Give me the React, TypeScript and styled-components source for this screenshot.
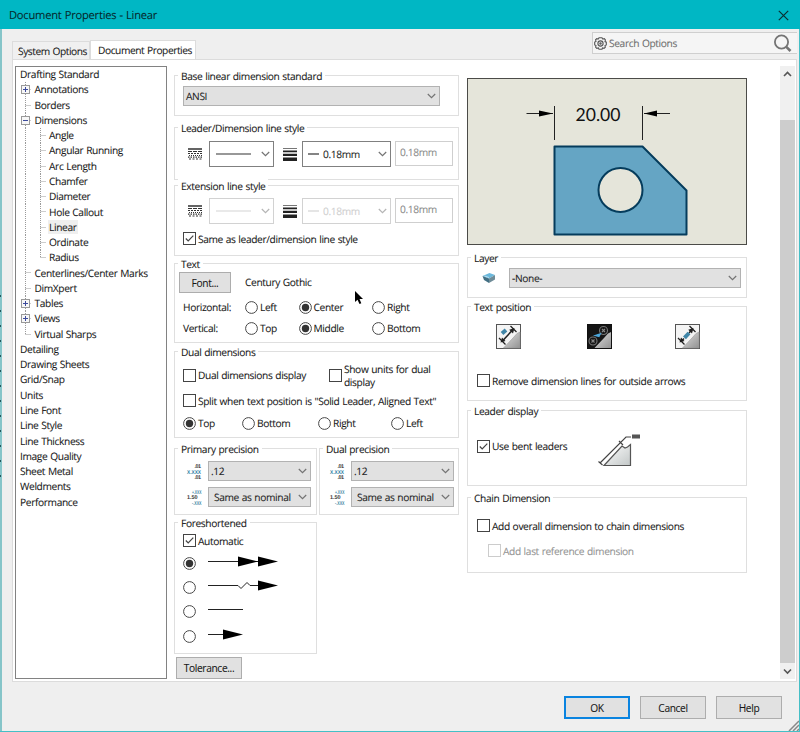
import React from "react";
import styled, { createGlobalStyle } from "styled-components";

const Global = createGlobalStyle`
  body { margin: 0; background: #efefef; }
  * { box-sizing: border-box; }
  button, input { font: inherit; color: inherit; letter-spacing: inherit; }
`;

const Window = styled.div`
  position: relative;
  width: 800px;
  height: 732px;
  overflow: hidden;
  display: flex;
  flex-direction: column;
  background: #efefef;
  color: #161616;
  font: 10.2px/13px "Open Sans", "Noto Sans", sans-serif;
  letter-spacing: -0.36px;
  word-spacing: 0.5px;
  -webkit-text-stroke: 0.08px currentColor;
  text-rendering: geometricPrecision;
  white-space: nowrap;
`;
const TitleBar = styled.header`
  height: 29px;
  flex: none;
  display: flex;
  align-items: center;
  justify-content: space-between;
  padding: 1px 11px 0 9px;
  background: #00b7c4;
  color: #06292c;
  font-size: 11.2px;
  letter-spacing: -0.25px;
`;
const Frame = styled.div`
  flex: 1;
  display: flex;
  border-right: 1px solid #45bfc6;
  border-bottom: 1px solid #45bfc6;
`;
const Edge = styled.div`
  width: 2px;
  background: #86c5c9;
  display: flex;
  padding-top: 266px;
`;
const EdgeMarks = styled.div`
  width: 1px;
  height: 190px;
  background: repeating-linear-gradient(#24575b 0 2px, #86c5c9 2px 15px);
`;
const Body = styled.div`
  flex: 1;
  display: flex;
  flex-direction: column;
  padding-left: 10px;
`;
const TopStrip = styled.div`
  height: 30px;
  display: flex;
  justify-content: space-between;
  align-items: flex-end;
`;
const Tabs = styled.div`
  display: flex;
  align-items: flex-end;
`;
const Tab = styled.div<{ $active?: boolean }>`
  width: ${(p) => (p.$active ? 106 : 78)}px;
  height: ${(p) => (p.$active ? 20 : 18)}px;
  margin-bottom: ${(p) => (p.$active ? -1 : 0)}px;
  border: 1px solid #dcdcdc;
  border-bottom: 0;
  background: ${(p) => (p.$active ? "#fff" : "#f0f0f0")};
  padding: ${(p) => (p.$active ? "3px 0 0 7px" : "3px 0 0 5px")};
  letter-spacing: -0.43px;
`;
const Search = styled.div`
  width: 205px;
  height: 22px;
  margin: 0 2px 5px 0;
  display: flex;
  align-items: center;
  gap: 2px;
  padding: 0 4px 0 1px;
  border: 1px solid #cfcfcf;
  border-right: 0;
  background: #f5f5f5;
  color: #6c6c6c;
  & > span { flex: 1; padding-top: 1px; }
`;
const Panel = styled.main`
  height: 623px;
  margin-right: 2px;
  display: flex;
  padding: 6px 0 0 2px;
  border: 1px solid #dcdcdc;
  background: #fff;
`;
const Tree = styled.div`
  width: 152px;
  height: 613px;
  border: 1px solid #828282;
`;
const TreeRow = styled.div`
  height: 15.27px;
  display: flex;
  align-items: center;
`;
const Guide = styled.svg`
  flex: none;
  height: 15.27px;
  overflow: visible;
`;
const TreeText = styled.span<{ $selected?: boolean; $root?: boolean }>`
  margin: -1px 0 0 ${(p) => (p.$root ? 3 : 0)}px;
  padding: 0 1px;
  line-height: 14px;
  background: ${(p) => (p.$selected ? "#efefef" : "transparent")};
`;
const Column = styled.section<{ $left: number; $width: number; $top: number }>`
  width: ${(p) => p.$width}px;
  margin-left: ${(p) => p.$left}px;
  padding-top: ${(p) => p.$top}px;
  display: flex;
  flex-direction: column;
`;
const GroupBox = styled.div<{ $height: number; $gap: number; $width?: number }>`
  height: ${(p) => p.$height}px;
  width: ${(p) => (p.$width ? `${p.$width}px` : "100%")};
  margin-bottom: ${(p) => p.$gap}px;
  flex: none;
  border: 1px solid #dfdfdf;
`;
const Legend = styled.div`
  width: fit-content;
  height: 14px;
  margin: -7px 0 -8px 3px;
  padding: 1px 3px 0;
  background: #fff;
`;
const Row = styled.div<{ $top: number; $h: number; $cols: string; $left?: number }>`
  margin-top: ${(p) => p.$top}px;
  height: ${(p) => p.$h}px;
  padding-left: ${(p) => p.$left ?? 8}px;
  display: grid;
  grid-template-columns: ${(p) => p.$cols};
  align-items: center;
`;
const Pair = styled.div`
  display: flex;
  gap: 2px;
`;
const SelectBox = styled.div<{ $w: number; $h: number; $kind?: "white" | "off"; $pad?: number }>`
  width: ${(p) => p.$w}px;
  height: ${(p) => p.$h}px;
  display: flex;
  align-items: center;
  gap: 4px;
  padding: 0 3px 0 ${(p) => p.$pad ?? 2}px;
  border: 1px solid ${(p) => (p.$kind === "white" ? "#808080" : p.$kind === "off" ? "#d2d2d2" : "#b2b2b2")};
  background: ${(p) => (p.$kind ? "#fff" : "#e1e1e1")};
  color: ${(p) => (p.$kind === "off" ? "#cfcfcf" : "#1d1d1d")};
  & > span { padding-top: 1px; }
  & > svg:last-child { margin-left: auto; flex: none; }
`;
const Field = styled.div`
  width: 58px;
  height: 25px;
  align-self: start;
  padding: 4px 4px;
  border: 1px solid #cfcfcf;
  color: #8a8a8a;
`;
const Choice = styled.label<{ $off?: boolean }>`
  display: flex;
  align-items: center;
  gap: 2px;
  line-height: 12.5px;
  color: ${(p) => (p.$off ? "#929292" : "inherit")};
  & > svg { flex: none; }
  & > span { padding-top: 1px; }
`;
const Button = styled.button<{ $w: number; $h: number; $primary?: boolean }>`
  width: ${(p) => p.$w}px;
  height: ${(p) => p.$h}px;
  padding: 1px 0 0;
  border: ${(p) => (p.$primary ? "2px solid #0a84e0" : "1px solid #adadad")};
  background: #e1e1e1;
`;
const Preview = styled.svg`
  display: block;
  flex: none;
  margin-bottom: 12px;
`;
const ScrollBar = styled.div`
  width: 15px;
  height: 613px;
  margin-left: 33px;
  display: flex;
  flex-direction: column;
  justify-content: space-between;
  background: #f0f0f0;
`;
const Arrow = styled.svg`
  display: block;
  margin: 1px 0;
`;
const Thumb = styled.div`
  height: 543px;
  margin-top: 38px;
  background: #cdcdcd;
`;
const Footer = styled.footer`
  display: flex;
  justify-content: flex-end;
  gap: 10px;
  padding: 14px 17px 0 0;
`;
const Overlay = styled.svg<{ $x: number; $y: number }>`
  position: absolute;
  left: ${(p) => p.$x}px;
  top: ${(p) => p.$y}px;
`;
const NumberIcon = styled.svg`
  display: block;
  overflow: visible;
  font-family: "Liberation Sans", sans-serif;
  font-size: 5.5px;
  font-weight: bold;
  letter-spacing: 0;
  -webkit-text-stroke: 0;
`;

const Chevron = ({ off }: { off?: boolean }) => (
  <svg width="9" height="7" viewBox="0 0 9 7">
    <path d="M.8 1 4.5 4.7 8.2 1" fill="none" stroke={off ? "#b5b5b5" : "#747474"} strokeWidth="1.2" />
  </svg>
);

function Check({ on, off, children }: { on?: boolean; off?: boolean; children: React.ReactNode }) {
  return (
    <Choice $off={off}>
      <svg width="13" height="13">
        <rect x=".5" y=".5" width="12" height="12" fill="#fff" stroke={off ? "#cccccc" : "#444"} />
        {on && <path d="M2.8 6.5 5.2 9 10.3 3.6" fill="none" stroke="#444" strokeWidth="1.2" />}
      </svg>
      <span>{children}</span>
    </Choice>
  );
}

function Radio({ on, children }: { on?: boolean; children?: React.ReactNode }) {
  return (
    <Choice>
      <svg width="13" height="13">
        <circle cx="6.5" cy="6.5" r="5.9" fill="#fff" stroke="#484848" />
        {on && <circle cx="6.5" cy="6.5" r="3.7" fill="#333" />}
      </svg>
      <span>{children}</span>
    </Choice>
  );
}

type GroupProps = { title: string; h: number; gap?: number; w?: number; children: React.ReactNode };
const Group = ({ title, h, gap = 0, w, children }: GroupProps) => (
  <GroupBox $height={h} $gap={gap} $width={w}>
    <Legend>{title}</Legend>
    {children}
  </GroupBox>
);

type Node = { t: string; d: number; box?: "+" | "-"; last?: boolean };
const tree: Node[] = [
  { t: "Drafting Standard", d: 0 },
  { t: "Annotations", d: 1, box: "+" },
  { t: "Borders", d: 1 },
  { t: "Dimensions", d: 1, box: "-" },
  ...["Angle", "Angular Running", "Arc Length", "Chamfer", "Diameter", "Hole Callout", "Linear", "Ordinate"].map((t) => ({ t, d: 2 })),
  { t: "Radius", d: 2, last: true },
  { t: "Centerlines/Center Marks", d: 1 },
  { t: "DimXpert", d: 1 },
  { t: "Tables", d: 1, box: "+" },
  { t: "Views", d: 1, box: "+" },
  { t: "Virtual Sharps", d: 1, last: true },
  ...["Detailing", "Drawing Sheets", "Grid/Snap", "Units", "Line Font", "Line Style", "Line Thickness", "Image Quality", "Sheet Metal", "Weldments", "Performance"].map((t) => ({ t, d: 0 })),
];

function TreeItem({ n }: { n: Node }) {
  const x = n.d === 1 ? 9.5 : 24.5;
  return (
    <TreeRow>
      {n.d > 0 && (
        <Guide width={n.d === 1 ? 17.5 : 32}>
          <g stroke="#9a9a9a" strokeDasharray="1 1" fill="none">
            {n.d === 2 && <path d="M9.5 0V15.3" />}
            <path d={`M${x} 0V${n.last ? 8 : 15.3}M${x} 7.5H${x + 6}`} />
          </g>
          {n.box && (
            <g>
              <rect x="5.5" y="3.5" width="8" height="8" fill="#f7f7f7" stroke="#999" />
              <path d={n.box === "+" ? "M7 7.5H12M9.5 5V10" : "M7 7.5H12"} stroke="#3d4b9c" />
            </g>
          )}
        </Guide>
      )}
      <TreeText $root={n.d === 0} $selected={n.t === "Linear"}>{n.t}</TreeText>
    </TreeRow>
  );
}

const StyleIcon = () => (
  <svg width="14" height="12">
    <path d="M0 1H14" stroke="#222" strokeWidth="1.4" />
    <g stroke="#333" strokeWidth="1.2" fill="none">
      <path d="M0 3.5H14" strokeDasharray="4 1" />
      <path d="M0 5.5H14" strokeDasharray="2 1" />
      <path d="M1 7.5H14" strokeDasharray="1 1" />
      <path d="M0 9.2H14" strokeDasharray="1.5 1" />
      <path d="M1 11H14" strokeDasharray="2 1.5" />
    </g>
  </svg>
);
const WeightIcon = () => (
  <svg width="14" height="13" fill="#222">
    <path d="M0 0H14V1H0Z" fill="#777" />
    <path d="M0 2.6H14V4.2H0ZM0 5.7H14V8H0ZM0 9.6H14V13H0Z" />
  </svg>
);

function LineStyleRow({ off, top }: { off?: boolean; top: number }) {
  const c = off ? "#d4d4d4" : "#333";
  const kind = off ? "off" : "white";
  return (
    <Row $top={top} $h={26} $left={13} $cols="21px 74px 19px 93px 58px">
      <StyleIcon />
      <SelectBox $w={65} $h={26} $kind={kind} $pad={6}>
        <svg width="35" height="2"><path d="M0 1H35" stroke={c} strokeWidth="1.2" /></svg>
        <Chevron off={off} />
      </SelectBox>
      <WeightIcon />
      <SelectBox $w={89} $h={26} $kind={kind} $pad={5}>
        <svg width="11" height="2"><path d="M0 1H11" stroke={c} strokeWidth="1.2" /></svg>
        <span>0.18mm</span>
        <Chevron off={off} />
      </SelectBox>
      <Field>0.18mm</Field>
    </Row>
  );
}

const DecimalIcon = () => (
  <NumberIcon width="16" height="15">
    <text x="7.5" y="4" fill="#333" textLength="6.5">.01</text>
    <text x="0" y="9.5" fill="#2f7fa5" textLength="14" lengthAdjust="spacingAndGlyphs">X.XXX</text>
    <text x="7.5" y="15" fill="#333" textLength="6.5">.01</text>
  </NumberIcon>
);
const ToleranceIcon = () => (
  <NumberIcon width="16" height="16">
    <text x="5" y="5" fill="#4688a5" textLength="9.5" lengthAdjust="spacingAndGlyphs">+.XXX</text>
    <text x="0" y="10" fill="#333" textLength="10.5">1.50</text>
    <text x="5" y="15.5" fill="#4688a5" textLength="9.5" lengthAdjust="spacingAndGlyphs">-.XXX</text>
  </NumberIcon>
);

const Precision = ({ title, w, left }: { title: string; w: number; left: number }) => (
  <Group title={title} h={67} w={w}>
    <Row $top={13} $h={20} $left={left} $cols="21px 103px">
      <DecimalIcon />
      <SelectBox $w={103} $h={20}><span>.12</span><Chevron /></SelectBox>
    </Row>
    <Row $top={6} $h={20} $left={left} $cols="21px 103px">
      <ToleranceIcon />
      <SelectBox $w={103} $h={20} $pad={5}><span>Same as nominal</span><Chevron /></SelectBox>
    </Row>
  </Group>
);

const leaders = [
  { line: "M0 6.5H50", heads: [30, 50] },
  { line: "M0 6.5H30L33 9.5 39 3.5 42 6.5H52", heads: [50] },
  { line: "M0 6.5H35", heads: [] },
  { line: "M0 6.5H16", heads: [15] },
];

function PositionIcon({ mode }: { mode: "above" | "dark" | "inline" }) {
  const dark = mode === "dark";
  return (
    <svg width="25" height="25" viewBox="0 0 25 25">
      <defs>
        <linearGradient id={`face-${mode}`} x1="0" y1="0" x2="1" y2="1">
          <stop stopColor="#e2e2e2" /><stop offset="1" stopColor="#929292" />
        </linearGradient>
      </defs>
      <rect x=".5" y=".5" width="24" height="24" fill={dark ? "#151515" : "#f4f4f4"} stroke={dark ? "#111" : "#555"} />
      <path d="M7.5 24 17 14 21 9.5 24 8V24Z" fill={`url(#face-${mode})`} stroke={dark ? "none" : "#999"} strokeWidth=".6" />
      {dark ? (
        <g fill="none" stroke="#777" strokeWidth="1.1">
          <circle cx="16.5" cy="6.5" r="4" /><circle cx="6" cy="17" r="4" />
          <path d="M15 5 18 8M18 5 15 8M4.500 15.500 7.500 18.500M7.500 15.500 4.500 18.500" stroke="#888" />
          <path d="M8 11.5 13.5 9.8 12 12.5Z" fill="#4ca7dc" stroke="#4ca7dc" />
        </g>
      ) : (
        <g stroke="#222" fill="none">
          <path d="M14.5 2 20.5 8M3 14 9.5 20.5" strokeWidth="1.3" />
          <path d={mode === "above" ? "M6 17.5 17.5 5" : "M6 17.5 9 14.5M14 9 17.5 5"} strokeWidth="1.5" />
          <path d="M18.5 4 17 9.500 13.2 5.7ZM4.5 18.5 6 13.5 9.5 17Z" fill="#222" stroke="none" />
          <path d={mode === "above" ? "M6 9.5 10 6" : "M9.5 13.8 14 9"} stroke="#3f85a7" strokeWidth="4" />
        </g>
      )}
    </svg>
  );
}

const BentLeader = () => (
  <svg width="43" height="34" viewBox="0 0 43 34">
    <defs>
      <linearGradient id="bent" x1="0" y1="0" x2="1" y2="1">
        <stop stopColor="#fff" /><stop offset="1" stopColor="#c2c7c7" />
      </linearGradient>
    </defs>
    <path d="M6 32.5 24 13 27 15 29.5 14 32.5 11.5V32.5Z" fill="url(#bent)" stroke="#555" strokeWidth="1.2" />
    <path d="M2 30 28 4H33M.5 28.5 4.500 32M21 8 25 12" fill="none" stroke="#444" strokeWidth="1.2" />
    <rect x="34" y="1.5" width="8" height="4" fill="#555" />
  </svg>
);

export default function App() {
  return (
    <Window>
      <Global />
      <TitleBar>
        <span>Document Properties - Linear</span>
        <svg width="11" height="11"><path d="M.8.8 10.2 10.2M10.2.8.8 10.2" stroke="#0b3033" strokeWidth="1.2" /></svg>
      </TitleBar>
      <Frame>
        <Edge><EdgeMarks /></Edge>
        <Body>
          <TopStrip>
            <Tabs>
              <Tab>System Options</Tab>
              <Tab $active>Document Properties</Tab>
            </Tabs>
            <Search>
              <svg width="13" height="13" viewBox="0 0 13 13" fill="none" stroke="#555" strokeWidth="1.1">
                <path d="M5 .8H8L8.6 2 10.3 1.7 11.4 3 11 4.6 12.3 5.2V8L11 8.6 11.3 10.2 10 11.4 8.5 11 8 12.3H5L4.4 11 2.8 11.4 1.6 10.2 2 8.6.7 8V5L2 4.4 1.6 2.8 2.8 1.7 4.4 2Z" />
                <circle cx="6.5" cy="6.5" r="2.6" /><circle cx="6.5" cy="6.5" r=".7" />
              </svg>
              <span>Search Options</span>
              <svg width="20" height="20" viewBox="0 0 20 20" fill="none" stroke="#747474">
                <circle cx="8.5" cy="9" r="6.6" strokeWidth="1.8" />
                <path d="M13.3 13.8 17.5 18" strokeWidth="2.6" />
              </svg>
            </Search>
          </TopStrip>
          <Panel>
            <Tree>{tree.map((n) => <TreeItem key={n.t} n={n} />)}</Tree>
            <Column $left={7} $width={285} $top={9}>
              <Group title="Base linear dimension standard" h={41} gap={11}>
                <Row $top={11} $h={20} $cols="257px">
                  <SelectBox $w={257} $h={20}><span>ANSI</span><Chevron /></SelectBox>
                </Row>
              </Group>
              <Group title="Leader/Dimension line style" h={53} gap={5}>
                <LineStyleRow top={14} />
              </Group>
              <Group title="Extension line style" h={71} gap={7}>
                <LineStyleRow off top={13} />
                <Row $top={8} $h={13} $cols="1fr"><Check on>Same as leader/dimension line style</Check></Row>
              </Group>
              <Group title="Text" h={80} gap={8}>
                <Row $top={9} $h={21} $left={4} $cols="66px 1fr">
                  <Button $w={52} $h={21}>Font...</Button><span>Century Gothic</span>
                </Row>
                <Row $top={7} $h={14} $cols="62px 53.5px 73.5px 1fr">
                  <span>Horizontal:</span><Radio>Left</Radio><Radio on>Center</Radio><Radio>Right</Radio>
                </Row>
                <Row $top={7} $h={14} $cols="62px 53.5px 73.5px 1fr">
                  <span>Vertical:</span><Radio>Top</Radio><Radio on>Middle</Radio><Radio>Bottom</Radio>
                </Row>
              </Group>
              <Group title="Dual dimensions" h={87} gap={10}>
                <Row $top={11} $h={26} $cols="146px 1fr">
                  <Check>Dual dimensions display</Check>
                  <Check>Show units for dual<br />display</Check>
                </Row>
                <Row $top={6} $h={13} $cols="1fr"><Check>Split when text position is "Solid Leader, Aligned Text"</Check></Row>
                <Row $top={9} $h={14} $cols="59px 76px 73px 1fr">
                  <Radio on>Top</Radio><Radio>Bottom</Radio><Radio>Right</Radio><Radio>Left</Radio>
                </Row>
              </Group>
              <Pair>
                <Precision title="Primary precision" w={143} left={12} />
                <Precision title="Dual precision" w={140} left={10} />
              </Pair>
              <Column $left={0} $width={143} $top={7}>
                <Group title="Foreshortened" h={132} gap={3}>
                  <Row $top={12} $h={13} $cols="1fr"><Check on>Automatic</Check></Row>
                  {leaders.map((l, i) => (
                    <Row key={l.line} $top={i ? 10.4 : 7.5} $h={14} $cols="25px 72px">
                      <Radio on={i === 0} />
                      <svg width="72" height="17">
                        <path d={l.line} fill="none" stroke="#222" />
                        {l.heads.map((x) => <path key={x} d={`M${x} 1.5 ${x + 20} 6.5 ${x} 11.5Z`} />)}
                      </svg>
                    </Row>
                  ))}
                </Group>
                <Row $top={0} $h={22} $left={2} $cols="1fr"><Button $w={66} $h={22}>Tolerance...</Button></Row>
              </Column>
            </Column>
            <Column $left={8} $width={280} $top={12}>
              <Preview width="280" height="167" viewBox="0 0 280 167">
                <rect x=".5" y=".5" width="279" height="166" fill="#e5e5da" stroke="#4b4b48" />
                <path d="M87.5 68.5H175.5L219.5 112.5V156.5H87.5Z" fill="#65a5c4" stroke="#053c5c" strokeWidth="2" strokeLinejoin="round" />
                <circle cx="153.5" cy="112" r="22" fill="#e5e5da" stroke="#053c5c" strokeWidth="2" />
                <path d="M87.5 28V62M175.5 28V62M59.5 35.5H86M177 35.5H203" stroke="#222" />
                <path d="M86 35.5 72 32.5V38.5ZM177 35.5 190 32.5V38.5Z" />
                <text x="108.5" y="43" fontFamily="Lato" fontSize="18" letterSpacing="0" textLength="45" lengthAdjust="spacingAndGlyphs" fill="#111">20.00</text>
              </Preview>
              <Group title="Layer" h={41} gap={8}>
                <Row $top={11} $h={20} $left={14} $cols="27px 232px">
                  <svg width="14" height="12">
                    <path d="M.5 4 7.5 1 13 3 7 6.5Z" fill="#6bb8dc" />
                    <path d="M.5 4 7 6.5V11L2 8Z" fill="#426f83" />
                    <path d="M7 6.5 13 3V7.5L7 11Z" fill="#6f8c98" />
                    <path d="M2.5 4 7 5.5" stroke="#b8e2f4" />
                  </svg>
                  <SelectBox $w={232} $h={20}><span>-None-</span><Chevron /></SelectBox>
                </Row>
              </Group>
              <Group title="Text position" h={95} gap={9}>
                <Row $top={18} $h={25} $left={28} $cols="91px 88px 25px">
                  <PositionIcon mode="above" /><PositionIcon mode="dark" /><PositionIcon mode="inline" />
                </Row>
                <Row $top={25} $h={13} $left={9} $cols="1fr"><Check>Remove dimension lines for outside arrows</Check></Row>
              </Group>
              <Group title="Leader display" h={76} gap={11}>
                <Row $top={15} $h={42} $left={9} $cols="121px 1fr">
                  <Check on>Use bent leaders</Check>
                  <LeaderSlot><BentLeader /></LeaderSlot>
                </Row>
              </Group>
              <Group title="Chain Dimension" h={76}>
                <Row $top={22} $h={13} $left={9} $cols="1fr"><Check>Add overall dimension to chain dimensions</Check></Row>
                <Row $top={12} $h={13} $left={20} $cols="1fr"><Check off>Add last reference dimension</Check></Row>
              </Group>
            </Column>
            <ScrollBar>
              <Arrow width="15" height="14"><path d="M4 9 7.5 5.5 11 9" fill="none" stroke="#555" strokeWidth="1.6" /></Arrow>
              <Thumb />
              <Arrow width="15" height="14"><path d="M4 5.5 7.5 9 11 5.5" fill="none" stroke="#555" strokeWidth="1.6" /></Arrow>
            </ScrollBar>
          </Panel>
          <Footer>
            <Button $w={66} $h={23} $primary>OK</Button>
            <Button $w={66} $h={23}>Cancel</Button>
            <Button $w={66} $h={23}>Help</Button>
          </Footer>
        </Body>
      </Frame>
      <Overlay $x={355} $y={291} width="9" height="14"><path d="M0 0V11L2.5 8.7 4.5 13 6.3 12.2 4.5 8H8Z" /></Overlay>
      <Overlay $x={788} $y={720} width="11" height="11"><path d="M1 11 11 1M5 11 11 5M9 11 11 9" stroke="#888" strokeWidth="1.5" /></Overlay>
    </Window>
  );
}

const LeaderSlot = styled.div`
  display: flex;
  padding-top: 8px;
`;
